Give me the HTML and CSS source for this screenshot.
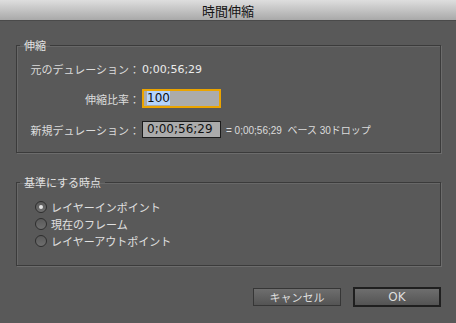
FILE: index.html
```html
<!DOCTYPE html>
<html lang="ja">
<head>
    <meta charset="UTF-8">
    <title>時間伸縮</title>
    <link rel="stylesheet" href="styles.css">
</head>
<body>
    <div class="titlebar">時間伸縮</div>
    <div class="dialog">
        <fieldset class="group stretch">
            <legend>伸縮</legend>
            <div class="row first">
                <span class="label">元のデュレーション：</span>
                <span class="value">0;00;56;29</span>
            </div>
            <div class="row second">
                <span class="label">伸縮比率：</span>
                <div class="field active"><span class="selected">100</span></div>
            </div>
            <div class="row third">
                <span class="label">新規デュレーション：</span>
                <div class="field">0;00;56;29</div>
                <span class="note">= 0;00;56;29&nbsp; ベース 30ドロップ</span>
            </div>
        </fieldset>

        <fieldset class="group anchor">
            <legend>基準にする時点</legend>
            <label class="radio"><span class="dot checked"></span>レイヤーインポイント</label>
            <label class="radio"><span class="dot"></span>現在のフレーム</label>
            <label class="radio"><span class="dot"></span>レイヤーアウトポイント</label>
        </fieldset>

        <div class="buttons">
            <button class="btn">キャンセル</button>
            <button class="btn default">OK</button>
        </div>
    </div>
</body>
</html>
```

FILE: styles.css
```css
body {
    margin: 0;
    width: 456px;
    height: 323px;
    overflow: hidden;
    background: #595959;
    font-family: "Lucida Grande", "DejaVu Sans", "Noto Sans CJK JP", sans-serif;
    font-size: 11px;
    color: #dcdcdc;
}
.titlebar {
    height: 21px;
    line-height: 21px;
    text-align: center;
    font-family: "Noto Sans CJK JP", sans-serif;
    font-size: 13px;
    color: #141414;
    background: linear-gradient(#dedede, #a9a9a9);
    border-bottom: 1px solid #4a4a4a;
    box-sizing: border-box;
}
.dialog {
    padding: 16px 15px 0 16px;
}
.group {
    margin: 0;
    padding: 0 0 0 3px;
    border: 1px solid #3b3b3b;
    box-shadow: 1px 1px 0 #6c6c6c, inset 1px 1px 0 #686868;
}
.group legend {
    padding: 0 4px;
    line-height: 16px;
    font-family: "Noto Sans CJK JP", sans-serif;
    color: #e2e2e2;
}
.stretch {
    padding-top: 8px;
    padding-bottom: 14px;
}
.row {
    display: flex;
    align-items: center;
    margin-left: 10px;
}
.row.first {
    height: 16px;
}
.row.second {
    margin-top: 12px;
    height: 19px;
}
.row.third {
    margin-top: 13px;
    height: 17px;
}
.label {
    width: 110px;
    text-align: right;
    font-family: "Noto Sans CJK JP", sans-serif;
    margin-right: 2px;
}
.value {
    color: #ececec;
}
.field {
    width: 79px;
    height: 17px;
    box-sizing: border-box;
    background: #ababab;
    border: 1px solid #1c1c1c;
    color: #111;
    font-size: 12px;
    line-height: 15px;
    padding-left: 4px;
}
.field.active {
    height: 19px;
    border: 2px solid #eba400;
    line-height: 15px;
    padding-left: 3px;
}
.selected {
    background: #b5d4fd;
}
.note {
    margin-left: 5px;
    font-size: 10px;
    font-family: "Liberation Sans", "Noto Sans CJK JP", sans-serif;
}
.anchor {
    margin-top: 21px;
    padding-top: 8px;
    padding-bottom: 16px;
}
.radio {
    display: flex;
    align-items: center;
    height: 17px;
    margin-left: 15px;
    font-family: "Noto Sans CJK JP", sans-serif;
    color: #e0e0e0;
}
.dot {
    width: 12px;
    height: 12px;
    box-sizing: border-box;
    border: 1px solid #2e2e2e;
    border-radius: 50%;
    background: linear-gradient(#5a5a5a, #6e6e6e);
    margin-right: 4px;
    display: flex;
    align-items: center;
    justify-content: center;
}
.dot.checked::after {
    content: "";
    width: 4px;
    height: 4px;
    border-radius: 50%;
    background: #e4e4e4;
}
.buttons {
    display: flex;
    justify-content: flex-end;
    align-items: center;
    gap: 12px;
    margin-top: 21px;
}
.btn {
    width: 88px;
    height: 18px;
    padding: 0;
    border: 1px solid #363636;
    background: linear-gradient(#6e6e6e, #545454);
    color: #dedede;
    font-family: "Noto Sans CJK JP", sans-serif;
    font-size: 11px;
    line-height: 14px;
}
.btn.default {
    height: 20px;
    border: 2px solid #1f1f1f;
    font-family: "Lucida Grande", "DejaVu Sans", sans-serif;
    font-size: 12px;
}
```
